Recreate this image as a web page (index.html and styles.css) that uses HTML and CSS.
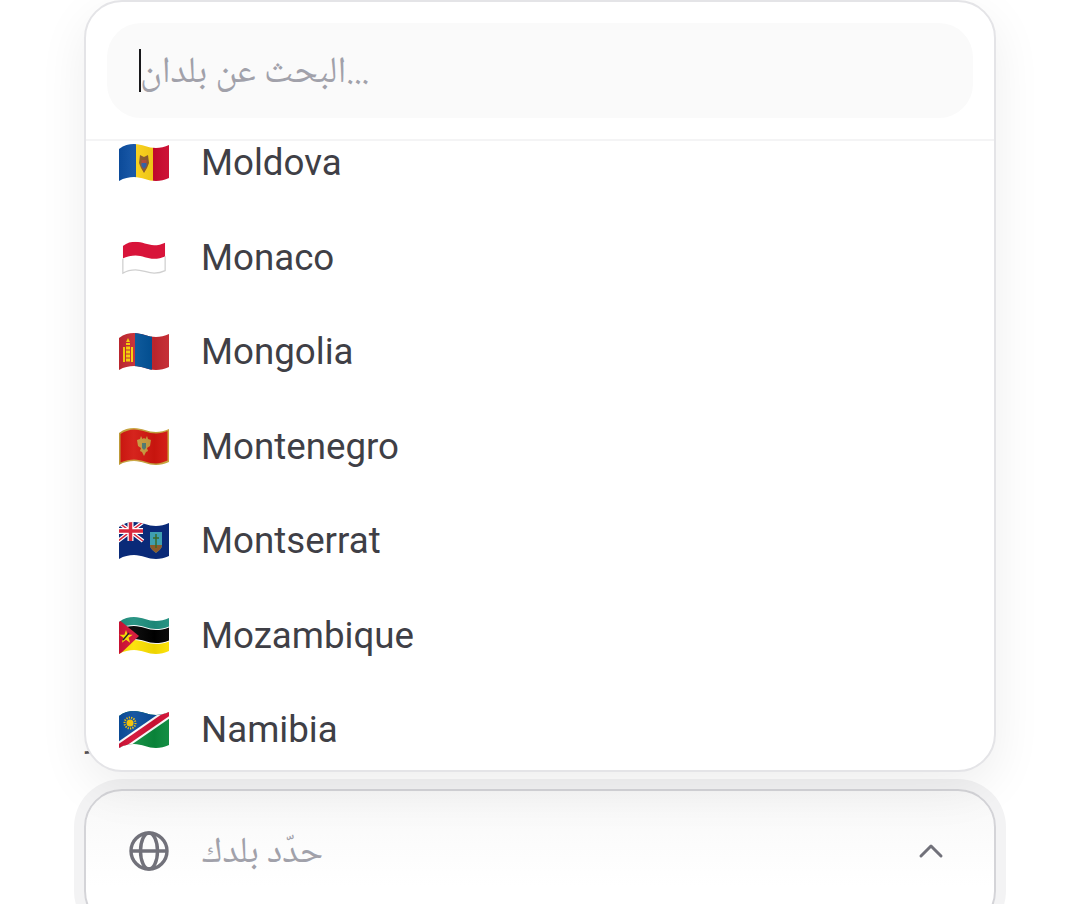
FILE: index.html
```html
<!DOCTYPE html>
<html lang="ar">
<head>
<meta charset="utf-8">
<title>حدّد بلدك</title>
<link rel="stylesheet" href="styles.css">
</head>
<body>
<svg class="defs" width="0" height="0" aria-hidden="true">
  <defs>
    <clipPath id="wave"><path d="M1 7C6 3 11 2 16 2C24 2 30 6 38 6C42 6 47 5 51 3V36C47 38 42 39 38 39C30 39 24 35 16 35C11 35 6 36 1 39Z"/></clipPath>
    <linearGradient id="shade" x1="0" y1="0" x2="1" y2="0">
      <stop offset="0" stop-color="#000" stop-opacity=".06"/>
      <stop offset=".3" stop-color="#fff" stop-opacity=".06"/>
      <stop offset=".7" stop-color="#000" stop-opacity=".06"/>
      <stop offset="1" stop-color="#fff" stop-opacity=".04"/>
    </linearGradient>
  </defs>
</svg>
<main class="page">
  <span class="peek">ر</span>
  <div class="menu">
    <div class="search-wrap">
      <div class="search"><span class="caret"></span><span class="placeholder">البحث عن بلدان...</span></div>
    </div>
    <div class="list">
      <ul class="rows">
        <li class="row"><span class="flag-box"><svg class="flag" viewBox="0 0 52 41"><g clip-path="url(#wave)"><rect width="18" height="41" fill="#0b4ea2"/><rect x="18" width="17" height="41" fill="#fbd116"/><rect x="35" width="17" height="41" fill="#cc092f"/><path d="M22 13l4 2 4-2 1 8-2 5-3 5-3-5-2-5z" fill="#8a5a2b"/><path d="M23.500 18h5v6l-2.500 3-2.500-3z" fill="#b5473a"/><path d="M23.500 21h5v3l-2.500 3-2.500-3z" fill="#2f5fa8"/><rect width="52" height="41" fill="url(#shade)"/></g></svg></span><span class="name">Moldova</span></li>
        <li class="row"><span class="flag-box"><svg class="flag narrow" viewBox="0 0 52 41"><g clip-path="url(#wave)"><rect width="52" height="41" fill="#fff"/><path d="M0 0H52V19C47 21 42 22 38 22C30 22 24 18 16 18C11 18 6 19 0 22Z" fill="#d8143a"/></g><path d="M1 22V39C6 36 11 35 16 35C24 35 30 39 38 39C42 39 47 38 51 36V19" fill="none" stroke="#d0d0d0" stroke-width="1.500"/></svg></span><span class="name">Monaco</span></li>
        <li class="row"><span class="flag-box"><svg class="flag" viewBox="0 0 52 41"><g clip-path="url(#wave)"><rect width="52" height="41" fill="#c4272f"/><rect x="17" width="17" height="41" fill="#015197"/><path d="M10 7l2 4h-4zM8 12h4v2H8zM5 16h2v15H5zM13 16h2v15h-2zM8 15.500h4v3H8zM8 19.500h4v3H8zM8 23.500h4v3H8zM8 27.500h4v3H8z" fill="#f9cf02"/><rect width="52" height="41" fill="url(#shade)"/></g></svg></span><span class="name">Mongolia</span></li>
        <li class="row"><span class="flag-box"><svg class="flag" viewBox="0 0 52 41"><g clip-path="url(#wave)"><rect width="52" height="41" fill="#c8a23a"/><path d="M2.500 8C7 5 12 3.500 16 3.500C24 3.500 30 7.500 38 7.500C42 7.500 46 6.500 49.500 5V34.500C46 36 42 37.500 38 37.500C30 37.500 24 33.500 16 33.500C12 33.500 7 34.500 2.500 36.500Z" fill="#d3160f"/><path d="M23 10l1.500 3 1.500-1 1.500 1L29 10l1 3 3 1-1 6-3 2 1 3-2 1-2 4-2-4-2-1 1-3-3-2-1-6 3-1z" fill="#c99a3c"/><path d="M24 17h4v5l-2 2-2-2z" fill="#4f7a70"/><rect width="52" height="41" fill="url(#shade)"/></g></svg></span><span class="name">Montenegro</span></li>
        <li class="row"><span class="flag-box"><svg class="flag" viewBox="0 0 52 41"><g clip-path="url(#wave)"><rect width="52" height="41" fill="#0a2a78"/><path d="M0 2L25 21M25 2L0 21" stroke="#fff" stroke-width="4"/><path d="M0 2L25 21M25 2L0 21" stroke="#d8283e" stroke-width="1.500"/><path d="M12.500 0V21M0 11H25" stroke="#fff" stroke-width="6"/><path d="M12.500 0V21M0 11H25" stroke="#d8283e" stroke-width="3.500"/><path d="M32 12H44V25C44 29 40 31 38 33C36 31 32 29 32 25Z" fill="#3f9fb0"/><path d="M32 25H44C44 29 40 31 38 33C36 31 32 29 32 25Z" fill="#8b5a2b"/><path d="M38 14V28M35 18H41" stroke="#3d6a2a" stroke-width="1.500"/></g></svg></span><span class="name">Montserrat</span></li>
        <li class="row"><span class="flag-box"><svg class="flag" viewBox="0 0 52 41"><g clip-path="url(#wave)"><rect width="52" height="41" fill="#fff"/><path d="M0 0H52V11C47 13 42 14 38 14C30 14 24 10 16 10C11 10 6 11 0 14Z" fill="#1f8f7e"/><path d="M0 15C6 12 11 11 16 11C24 11 30 15 38 15C42 15 47 14 52 12V25C47 27 42 28 38 28C30 28 24 24 16 24C11 24 6 25 0 28Z" fill="#000"/><path d="M0 29C6 26 11 25 16 25C24 25 30 29 38 29C42 29 47 28 52 26V41H0Z" fill="#fce100"/><path d="M0 4L21 21L0 41Z" fill="#d21034"/><path d="M8 15l1.600 4.800h5.100l-4.100 3 1.500 4.900-4.100-3-4.100 3 1.500-4.900-4.100-3h5.100z" fill="#fce100"/><path d="M5 25L11 18" stroke="#222" stroke-width="1.500"/><rect width="52" height="41" fill="url(#shade)"/></g></svg></span><span class="name">Mozambique</span></li>
        <li class="row"><span class="flag-box"><svg class="flag" viewBox="0 0 52 41"><g clip-path="url(#wave)"><rect width="52" height="41" fill="#0a8a3c"/><path d="M0 0H52L0 41Z" fill="#0a4d9c"/><path d="M0 33L52 -3V9L0 45Z" fill="#fff"/><path d="M0 35.500L52 -.5V6.500L0 42.500Z" fill="#d21034"/><circle cx="12" cy="14" r="3.500" fill="#f7c400"/><circle cx="12" cy="14" r="5.500" fill="none" stroke="#f7c400" stroke-width="2" stroke-dasharray="1.200 1.200"/><rect width="52" height="41" fill="url(#shade)"/></g></svg></span><span class="name">Namibia</span></li>
      </ul>
    </div>
  </div>
  <button class="trigger" type="button">
    <svg class="globe" viewBox="0 0 40 40" fill="none" stroke="currentColor" stroke-width="3.400"><circle cx="20" cy="20" r="18"/><ellipse cx="20" cy="20" rx="8.500" ry="18"/><path d="M2 20H38"/></svg>
    <span class="trigger-text">حدّد بلدك</span>
    <svg class="chevron" viewBox="0 0 26 16" fill="none" stroke="currentColor" stroke-width="3" stroke-linecap="round" stroke-linejoin="round"><path d="M3 13L13 3L23 13"/></svg>
  </button>
</main>
</body>
</html>
```
FILE: styles.css
```css
* { box-sizing: border-box; }
html, body { margin: 0; padding: 0; background: #fff; }
body { width: 1073px; height: 904px; overflow: hidden; font-family: Roboto, "Noto Sans", "DejaVu Sans", sans-serif; }
.defs { position: absolute; }
.page { position: relative; height: 904px; padding: 789px 77px 0 84px; overflow: hidden; }

.peek { position: absolute; left: 86px; top: 719px; font-size: 30px; color: #52525b; }

.menu {
  position: absolute; left: 84px; top: 0; z-index: 2;
  width: 912px; height: 772px;
  display: flex; flex-direction: column;
  background: #fff; border: 2px solid #e4e4e7; border-radius: 38px;
  box-shadow: 0 16px 50px rgba(0, 0, 0, .07);
  overflow: hidden;
}
.search-wrap { flex: none; height: 139px; padding: 21px 21px 0; border-bottom: 2px solid #f4f4f5; }
.search {
  height: 95px; padding-left: 32px;
  display: flex; align-items: center;
  background: #fafafa; border-radius: 34px;
}
.caret { width: 2px; height: 43px; margin-right: -1px; background: #18181b; }
.placeholder { font-family: "Noto Naskh Arabic", "Noto Sans Arabic", Roboto, sans-serif; font-size: 37px; color: #a1a1aa; padding-top: 6px; }

.list { flex: 1; overflow: hidden; }
.rows { list-style: none; margin: -25.6px 0 0; padding: 0; }
.row { height: 94.5px; padding-left: 32px; display: flex; align-items: center; gap: 31px; }
.flag-box { width: 52px; flex: none; display: flex; justify-content: center; }
.flag { width: 52px; height: 41px; display: block; }
.narrow { width: 44px; height: 39px; }
.name { font-size: 36.7px; color: #3f3f46; line-height: 1; padding-top: 2px; }

.trigger {
  width: 912px; height: 140px; padding: 0 50px 14px 43px;
  display: flex; align-items: center;
  font: inherit; text-align: left;
  background: linear-gradient(#f8f8f8, #fff 70%);
  border: 2px solid #d4d4d8; border-radius: 38px;
  box-shadow: 0 0 0 10px #f3f3f4;
}
.globe { width: 40px; height: 40px; margin-top: -2px; flex: none; color: #71717a; }
.trigger-text { margin-left: 33px; padding-top: 4px; flex: 1; font-family: "Noto Naskh Arabic", "Noto Sans Arabic", Roboto, sans-serif; font-size: 36.7px; color: #a1a1aa; }
.chevron { width: 26px; height: 16px; margin-top: -2px; flex: none; color: #71717a; }
```
